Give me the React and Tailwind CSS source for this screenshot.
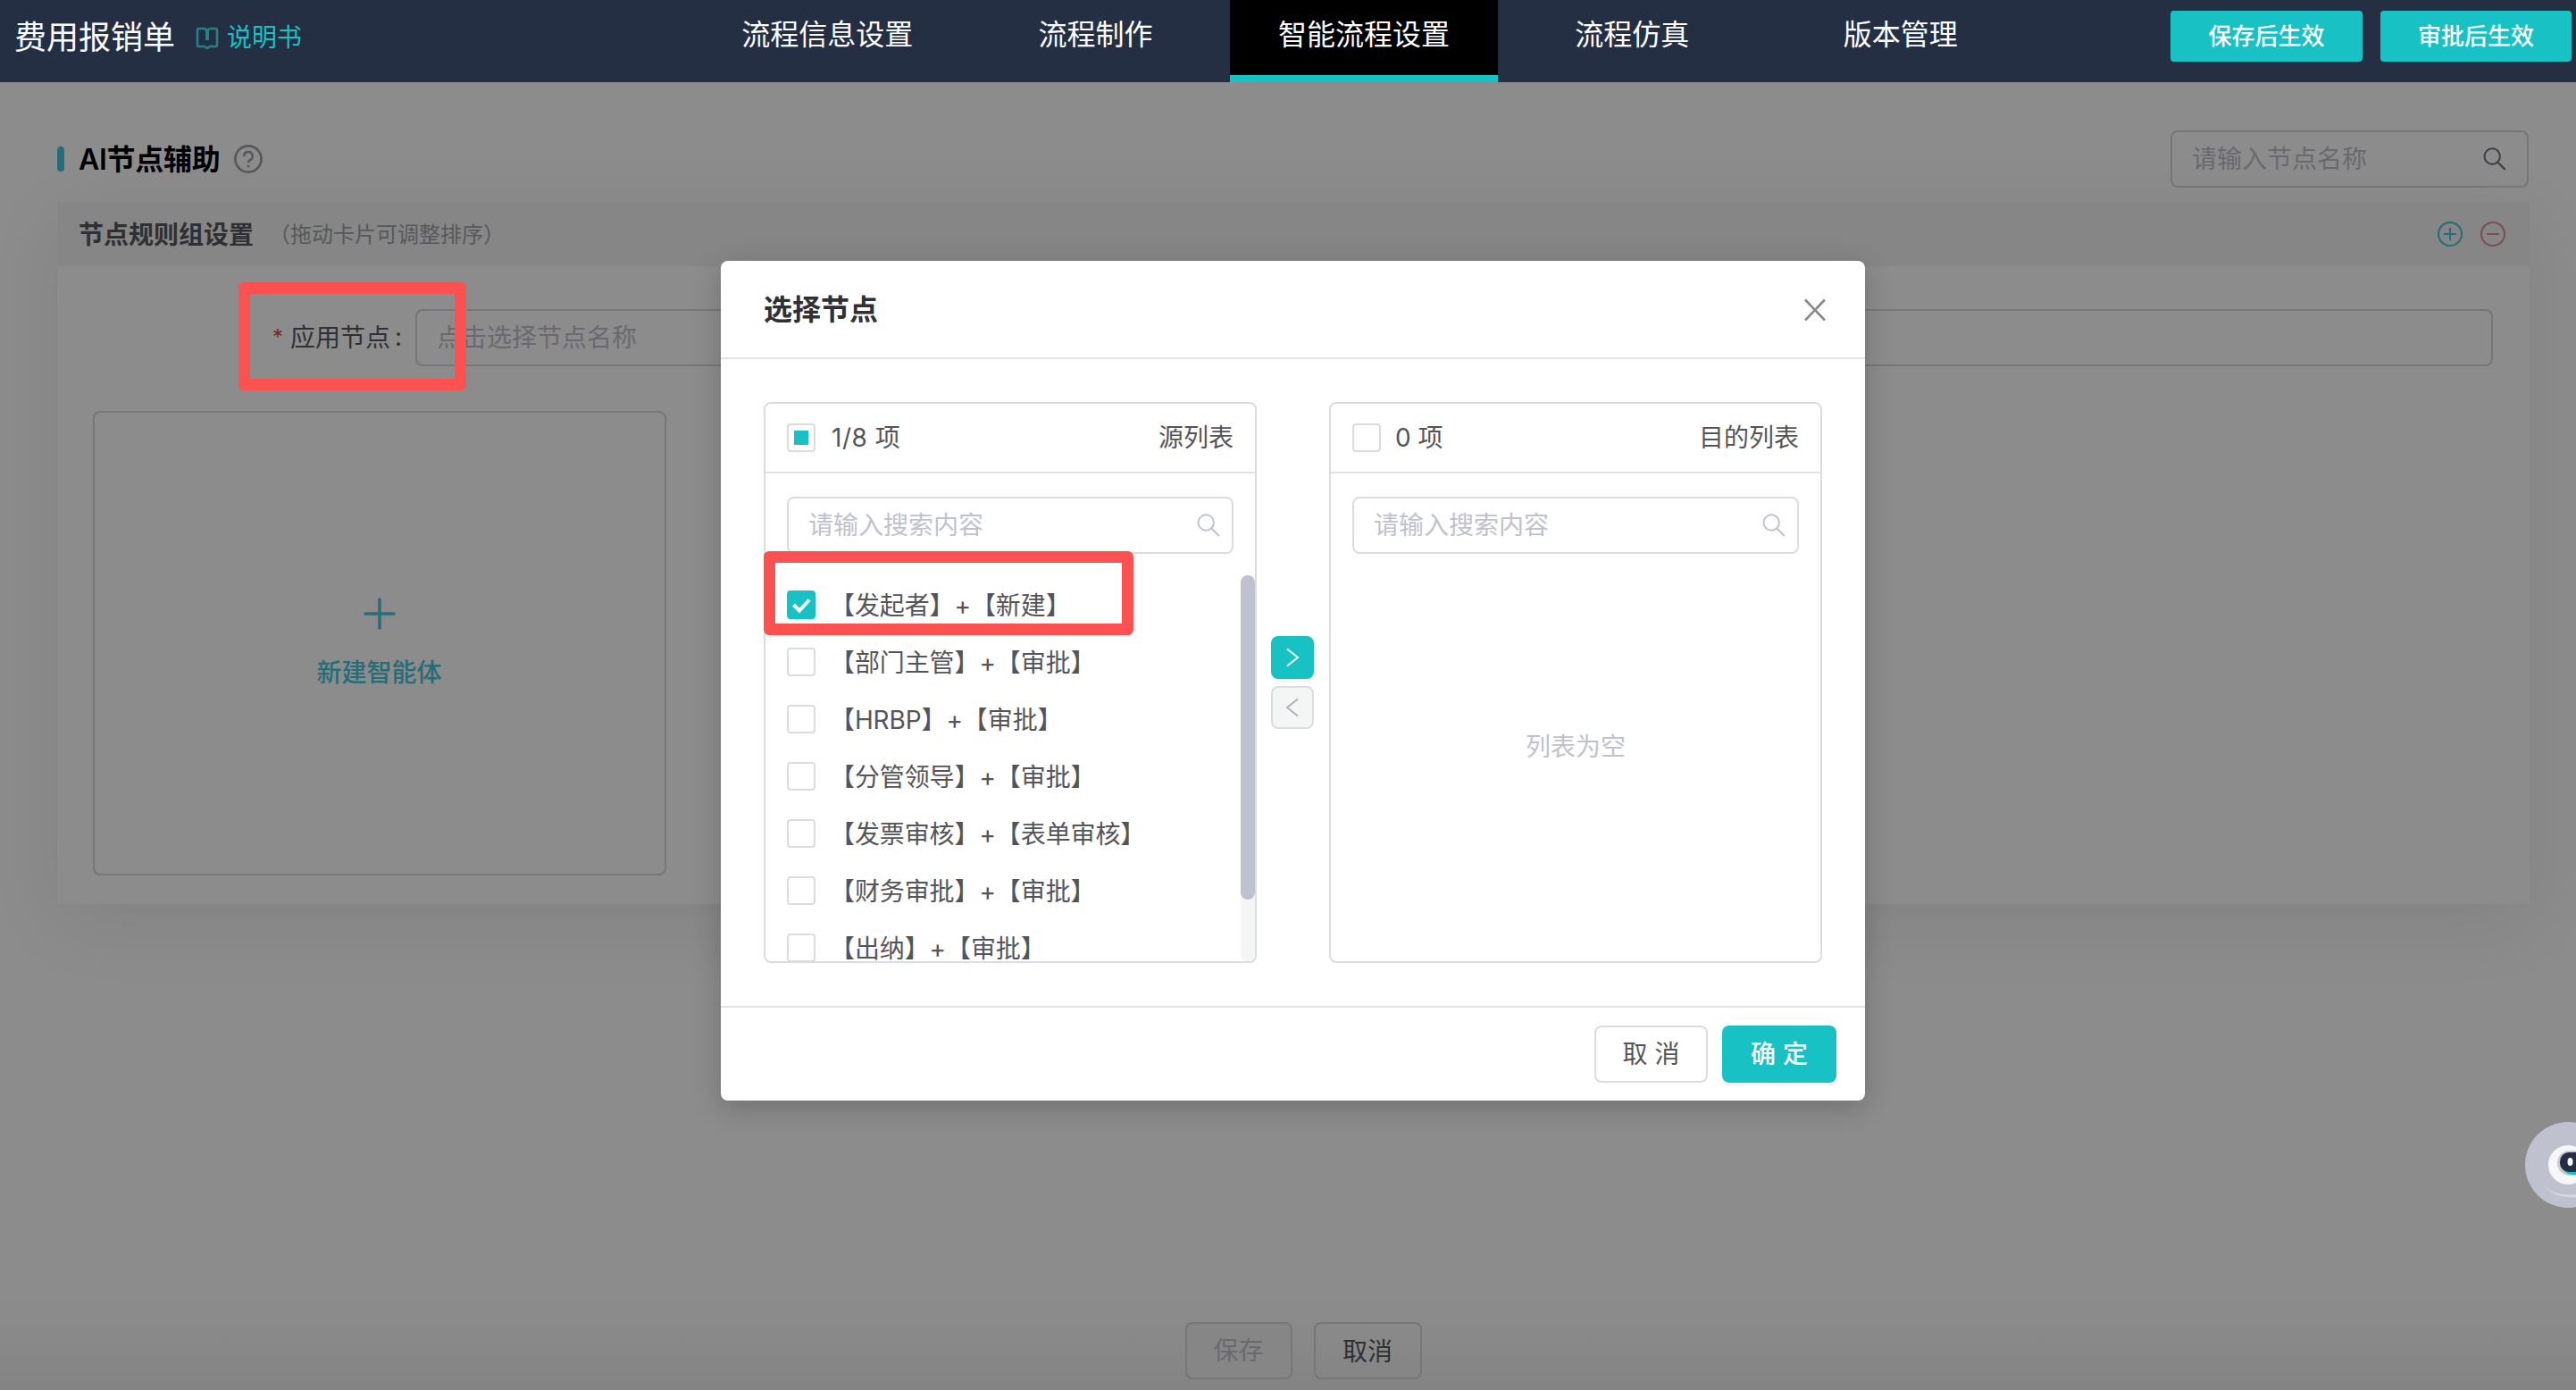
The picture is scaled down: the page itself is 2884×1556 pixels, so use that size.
import React, { useState } from 'react'

const TABS = ['流程信息设置', '流程制作', '智能流程设置', '流程仿真', '版本管理']

const NODES = [
  '【发起者】+【新建】',
  '【部门主管】+【审批】',
  '【HRBP】+【审批】',
  '【分管领导】+【审批】',
  '【发票审核】+【表单审核】',
  '【财务审批】+【审批】',
  '【出纳】+【审批】',
]

function SearchIcon({ className }) {
  return (
    <svg viewBox="0 0 26 26" className={`h-[26px] w-[26px] ${className}`} fill="none" stroke="currentColor" strokeWidth="2">
      <circle cx="10.2" cy="10" r="8.7" />
      <path d="M16 16.2l8.8 8.8" />
    </svg>
  )
}

function Checkbox({ checked, partial, onClick }) {
  return (
    <button
      onClick={onClick}
      className={`flex h-8 w-8 shrink-0 items-center justify-center rounded-[4px] ${checked ? 'bg-[#18c2c4]' : 'border-2 border-[#dcdcde] bg-white'}`}
    >
      {checked && (
        <svg viewBox="0 0 32 32" className="h-8 w-8" fill="none" stroke="#fff" strokeWidth="4">
          <path d="M7.5 16l6.5 6.5L25 10.5" />
        </svg>
      )}
      {partial && <span className="h-4 w-4 bg-[#18c2c4]" />}
    </button>
  )
}

function Header() {
  return (
    <header className="flex h-[92px] shrink-0 bg-[#252f44] text-white">
      <div className="flex h-[82px] w-[776px] items-center pl-4">
        <span className="pt-px text-[36px] leading-none">费用报销单</span>
        <svg viewBox="0 0 26 26" className="ml-[23px] mt-[3px] h-[26px] w-[26px]" fill="none" stroke="#25808a" strokeWidth="2.6" strokeLinejoin="round">
          <path d="M4 2h6l3 2 3-2h6q2 0 2 2v16q0 2-2 2h-6l-3 2-3-2H4q-2 0-2-2V4q0-2 2-2z" />
          <path d="M13 4v11" strokeWidth="4" />
        </svg>
        <span className="ml-[9px] pt-px text-[28px] leading-none text-[#18c2c4]">说明书</span>
      </div>
      <nav className="flex">
        {TABS.map((t, i) => (
          <a key={t} className={`flex w-[300.4px] justify-center pt-[15px] text-[32px] leading-[48px] ${i === 2 ? 'border-b-8 border-[#18c2c4] bg-black' : ''}`}>
            {t}
          </a>
        ))}
      </nav>
      <div className="ml-auto flex gap-5 pr-[5px] pt-3 text-[26px] font-medium">
        <button className="h-[57px] w-[215px] rounded-[4px] bg-[#18c2c4]">保存后生效</button>
        <button className="h-[57px] w-[214px] rounded-[4px] bg-[#18c2c4]">审批后生效</button>
      </div>
    </header>
  )
}

function RuleCard() {
  return (
    <section className="mx-16 mr-[52px] mt-4 h-[786px] shadow-[0_20px_80px_rgba(0,0,0,0.07)]">
      <div className="flex h-[72px] items-center bg-[#868686] pl-6 pr-[26px]">
        <h2 className="pt-px text-[28px] font-semibold text-[#2f3034]">节点规则组设置</h2>
        <span className="ml-[17px] pt-px text-[24px] text-[#57585c]">（拖动卡片可调整排序）</span>
        <svg viewBox="0 0 30 30" className="ml-auto h-[30px] w-[30px]" fill="none" stroke="#256d79" strokeWidth="2">
          <circle cx="15" cy="15" r="13" />
          <path d="M8 15h14M15 8v14" />
        </svg>
        <svg viewBox="0 0 30 30" className="ml-[18px] h-[30px] w-[30px]" fill="none" stroke="#7e4c50" strokeWidth="2">
          <circle cx="15" cy="15" r="13" />
          <path d="M8 15h14" />
        </svg>
      </div>
      <div className="h-[714px] bg-[#8c8c8c] pt-12">
        <div className="flex h-16 items-center pr-[41px] text-[28px]">
          <div className="relative flex w-[401px] items-center pl-[241px] text-[#2f3034]">
            <span className="w-5 text-[24px] text-[#74282b]">*</span>
            <span>应用节点</span>
            <span className="ml-[5px] -mt-0.5">:</span>
            <div className="absolute -top-[41px] left-[203px] z-10 h-[121px] w-[255px] rounded-[6px] border-[13px] border-[#fb5151]" />
          </div>
          <div className="flex h-16 flex-1 items-center rounded-lg border-2 border-[#777779] pl-[22px] text-[#69696f]">点击选择节点名称</div>
        </div>
        <div className="ml-10 mt-[50px] flex h-[520px] w-[642px] flex-col items-center rounded-lg border-2 border-[#777779] pr-px pt-[207px] text-[28px] text-[#256d79]">
          <svg viewBox="0 0 36 36" className="h-9 w-9" stroke="currentColor" strokeWidth="3.5" strokeLinecap="round">
            <path d="M2 18h32M18 2v32" />
          </svg>
          <span className="mt-[27px] font-medium leading-[42px]">新建智能体</span>
        </div>
      </div>
    </section>
  )
}

function TransferPanel({ head, title, partial, children }) {
  return (
    <div className="flex h-[628px] w-[552px] flex-col overflow-hidden rounded-lg border-2 border-[#dcdcde]">
      <div className="flex h-[78px] shrink-0 items-center border-b-2 border-[#e3e3e5] px-6 pb-px">
        <Checkbox partial={partial} />
        <span className="ml-4">{head}</span>
        <span className="ml-auto">{title}</span>
      </div>
      <div className="mx-6 mt-[26px] flex h-16 shrink-0 items-center rounded-lg border-2 border-[#dcdcde] pl-[22px] pr-[13px] text-[#bfc1cf]">
        请输入搜索内容
        <SearchIcon className="ml-auto" />
      </div>
      {children}
    </div>
  )
}

function NodeDialog() {
  const [picked, setPicked] = useState([0])

  function toggle(i) {
    setPicked(p => (p.includes(i) ? p.filter(x => x !== i) : [...p, i]))
  }

  return (
    <div className="absolute left-[807px] top-[292px] z-20 flex h-[940px] w-[1281px] flex-col rounded-lg bg-white text-[28px] text-[#555557] shadow-[0_8px_32px_rgba(0,0,0,0.2)]">
      <div className="flex h-[110px] shrink-0 items-center justify-between border-b-2 border-[#e3e3e5] pl-12 pr-[43px] pt-0.5">
        <h3 className="text-[32px] font-semibold text-[#2f3034]">选择节点</h3>
        <svg viewBox="0 0 26 26" className="h-[26px] w-[26px]" stroke="#8a8a8c" strokeWidth="2.6">
          <path d="M2 1.5l22 23M24 1.5l-22 23" />
        </svg>
      </div>
      <div className="flex flex-1 px-12 pt-12">
        <TransferPanel head={<span className="ml-0.5 tracking-[0.5px]">1/8 项</span>} title="源列表" partial>
          <div className="mt-[22px] flex min-h-0 flex-1 overflow-hidden">
            <div className="flex-1 pl-6 pt-[3px]">
              {NODES.map((n, i) => (
                <div key={n} className="flex h-16 items-center whitespace-pre">
                  <Checkbox checked={picked.includes(i)} onClick={() => toggle(i)} />
                  <span className="ml-4 pt-px tracking-[-0.1px]">{n}</span>
                </div>
              ))}
            </div>
            <div className="mt-0.5 w-4 rounded-full bg-[#f4f5f5]">
              <div className="h-[363px] rounded-full bg-[#bfc1cf]" />
            </div>
          </div>
        </TransferPanel>
        <div className="mx-4 mt-[262px] flex w-[49px] flex-col gap-2">
          <button className="flex h-12 w-12 items-center justify-center rounded-lg bg-[#18c2c4] shadow-[0_4px_0_rgba(0,0,0,0.04)]">
            <svg viewBox="0 0 24 24" className="h-6 w-6" fill="none" stroke="#fff" strokeWidth="2">
              <path d="M6 2.5l12 9.5-12 9.5" />
            </svg>
          </button>
          <button className="flex h-12 w-12 items-center justify-center rounded-lg border-2 border-[#dcdcde] bg-[#f4f5f5]">
            <svg viewBox="0 0 24 24" className="h-6 w-6" fill="none" stroke="#b0b1b8" strokeWidth="2">
              <path d="M18 2.5L6 12l12 9.5" />
            </svg>
          </button>
        </div>
        <TransferPanel head="0 项" title="目的列表">
          <div className="flex flex-1 items-center justify-center pb-6 text-[#bfc1cf]">列表为空</div>
        </TransferPanel>
      </div>
      <div className="flex h-[106px] shrink-0 gap-4 justify-end border-t-2 border-[#e3e3e5] pr-8 pt-5">
        <button className="h-16 w-[127px] rounded-lg border-2 border-[#dcdcde]">取<span className="ml-2">消</span></button>
        <button className="h-16 w-32 rounded-lg bg-[#18c2c4] font-medium text-white shadow-[0_4px_0_rgba(0,0,0,0.04)]">确<span className="ml-2">定</span></button>
      </div>
      <div className="absolute left-[48px] top-[325px] h-[94px] w-[414px] rounded-[6px] border-[13px] border-[#fb5151]" />
    </div>
  )
}

function Assistant() {
  return (
    <svg viewBox="0 0 57 96" className="absolute right-0 top-[1256px] h-24 w-[57px]">
      <circle cx="48" cy="48" r="48" fill="#bfc1cf" />
      <path d="M20 71q14 13 37 10v3q-23 2-37-13z" fill="#d9dade" />
      <circle cx="48" cy="48" r="22" fill="#f7f7f8" />
      <rect x="36" y="32" width="34" height="28" rx="14" fill="#c9cbd3" />
      <rect x="42" y="37" width="30" height="22" rx="10" fill="#18c2c4" />
      <rect x="39" y="34" width="34" height="22" rx="10" fill="#252f44" />
      <ellipse cx="50.5" cy="44.5" rx="3" ry="4.5" fill="#fff" />
    </svg>
  )
}

export default function App() {
  return (
    <div className="relative flex h-[1556px] w-[2884px] flex-col overflow-hidden bg-[#8c8c8c] font-[Inter,'Noto_Sans_CJK_SC',sans-serif]">
      <Header />
      <div className="mt-[54px] flex h-16 items-center pl-16 pr-[53px]">
        <span className="h-7 w-2 rounded-full bg-[#256d79]" />
        <h1 className="ml-4 pt-0.5 text-[32px] font-semibold tracking-[-0.3px] text-black">AI节点辅助</h1>
        <svg viewBox="0 0 32 32" className="ml-4 h-8 w-8" fill="none" stroke="#57585c" strokeWidth="2.6">
          <circle cx="16" cy="16" r="14.6" />
          <path d="M11.3 13a4.7 4.7 0 1 1 6.7 4q-2 1-2 3.2" />
          <path d="M16 22.8v2.6" />
        </svg>
        <div className="ml-auto flex h-16 w-[401px] items-center rounded-lg border-2 border-[#777779] pl-[22px] pr-[23px] text-[28px] text-[#69696f]">
          请输入节点名称
          <SearchIcon className="ml-auto text-[#3c3d42]" />
        </div>
      </div>
      <RuleCard />
      <footer className="mt-auto flex h-[104px] justify-center bg-linear-to-b from-[#8c8c8c] to-[#848484] pt-7 pl-[34px] text-[28px]">
        <button className="h-16 w-[120px] rounded-lg border-2 border-[#777779] bg-[#868686] text-[#69696f]">保存</button>
        <button className="ml-6 h-16 w-[121px] rounded-lg border-2 border-[#777779] pt-0.5 text-[#2f3034]">取消</button>
      </footer>
      <NodeDialog />
      <Assistant />
    </div>
  )
}
